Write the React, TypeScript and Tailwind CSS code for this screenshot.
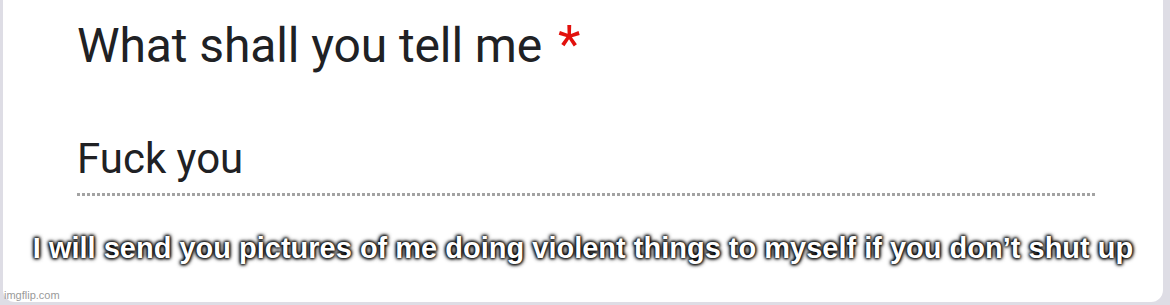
export default function App() {
  return (
    <div className="w-[1170px] h-[305px] bg-[#dedde5] overflow-hidden">
      <div className="relative ml-[3px] mr-[7px] h-[302px] bg-white rounded-b-[12px]">
        <div className="pl-[74px] pt-[13px] font-['Roboto',sans-serif] text-[#202124]">
          <div className="text-[48px] leading-[64px] tracking-[-0.1px]">
            What shall you tell me <span className="ml-[4px] text-[#e2110d] text-[52px]">*</span>
          </div>
          <div className="mt-[56px] text-[42px] leading-[50px]">Fuck you</div>
          <div className="mt-[9px] mr-[67px] h-[3px] bg-[repeating-linear-gradient(to_right,#a3a3a3_0_3px,transparent_3px_5px)]" />
        </div>
        <div className="mt-[35px] text-center font-['Liberation_Sans',Arial,sans-serif] font-bold text-[29px] leading-[34px] text-white [text-shadow:0_0_3px_#000,0_0_3px_#000,0_0_4px_#000,0_0_5px_#000]">
          I will send you pictures of me doing violent things to myself if you don’t shut up
        </div>
        <div className="absolute left-[1px] bottom-[1px] font-['Liberation_Sans',Arial,sans-serif] text-[11px] leading-[12px] text-[#9a9a9a]">
          imgflip.com
        </div>
      </div>
    </div>
  );
}
